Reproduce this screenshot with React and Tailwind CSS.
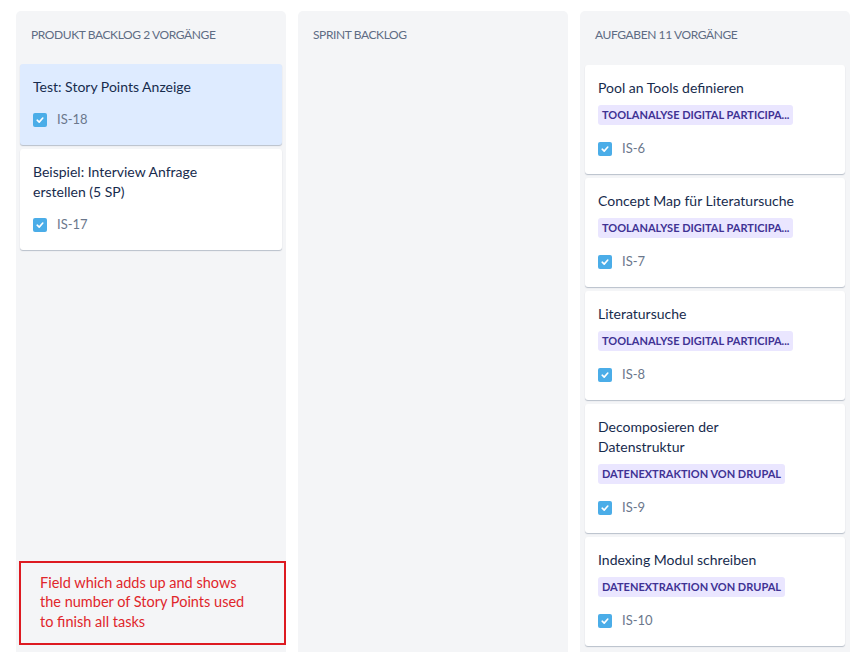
import React from "react";

const backlog = [
  { title: ["Test: Story Points Anzeige"], key: "IS-18", selected: true },
  { title: ["Beispiel: Interview Anfrage", "erstellen (5 SP)"], key: "IS-17" },
];

const aufgaben = [
  { title: ["Pool an Tools definieren"], epic: "TOOLANALYSE DIGITAL PARTICIPA...", key: "IS-6" },
  { title: ["Concept Map für Literatursuche"], epic: "TOOLANALYSE DIGITAL PARTICIPA...", key: "IS-7" },
  { title: ["Literatursuche"], epic: "TOOLANALYSE DIGITAL PARTICIPA...", key: "IS-8" },
  { title: ["Decomposieren der", "Datenstruktur"], epic: "DATENEXTRAKTION VON DRUPAL", key: "IS-9" },
  { title: ["Indexing Modul schreiben"], epic: "DATENEXTRAKTION VON DRUPAL", key: "IS-10" },
];

function Check() {
  return (
    <span className="w-[14px] h-[14px] rounded-[2px] bg-[#4bade8] flex items-center justify-center shrink-0">
      <svg width="10" height="10" viewBox="0 0 10 10">
        <path d="M2.2 5.2 L4.2 7.1 L7.8 3" stroke="white" strokeWidth="1.6" fill="none" strokeLinecap="round" strokeLinejoin="round" />
      </svg>
    </span>
  );
}

function Card({ item }) {
  return (
    <div
      className={
        "rounded-[3px] shadow-[0_1px_1px_rgba(9,30,66,0.25)] pl-[13px] pr-3 pt-[13px] pb-[17px] " +
        (item.selected ? "bg-[#deebff]" : "bg-white")
      }
    >
      <div className="text-[14px] leading-[20px] text-[#172b4d]">
        {item.title.map((l) => (
          <div key={l}>{l}</div>
        ))}
      </div>
      {item.epic && (
        <div className="mt-[7px] h-[20px]">
          <span className="inline-block bg-[#eae6ff] text-[#403294] font-bold text-[11px] leading-[20px] px-[4px] rounded-[3px] min-w-0 max-w-[200px] truncate">
            {item.epic}
          </span>
        </div>
      )}
      <div className={"flex items-center gap-[10px] h-[16px] " + (item.epic ? "mt-[16px]" : "mt-[15px]")}>
        <Check />
        <span className="text-[13px] text-[#6b778c]">{item.key}</span>
      </div>
    </div>
  );
}

function Column({ title, children, footer }) {
  return (
    <div className="w-[270px] bg-[#f4f5f7] rounded-t-[5px] flex flex-col">
      <div className="h-[53px] pl-[15px] pt-[16px] text-[12px] leading-[16px] text-[#5e6c84] tracking-[-0.4px]">{title}</div>
      <div className="flex flex-col gap-[4px] px-[4px] flex-1">{children}</div>
      {footer}
    </div>
  );
}

export default function App() {
  return (
    <div
      className="w-[856px] h-[652px] overflow-hidden bg-white flex gap-[12px] pl-[16px] pt-[11px]"
      style={{ fontFamily: "'Lato', 'Noto Sans', sans-serif" }}
    >
      <Column
        title="PRODUKT BACKLOG 2 VORGÄNGE"
        footer={
          <div className="ml-[3px] w-[267px] mb-[7px] border-[2.5px] border-[#dd1a21] pl-[19px] pt-[10px] pb-[12px] text-[14.5px] leading-[19.5px] text-[#e0262b]">
            Field which adds up and shows
            <br />
            the number of Story Points used
            <br />
            to finish all tasks
          </div>
        }
      >
        {backlog.map((it) => (
          <Card key={it.key} item={it} />
        ))}
      </Column>
      <Column title="SPRINT BACKLOG" />
      <Column title="AUFGABEN 11 VORGÄNGE">
        <div className="flex flex-col gap-[4px] pt-[1px] px-[1px]">
          {aufgaben.map((it) => (
            <Card key={it.key} item={it} />
          ))}
        </div>
      </Column>
    </div>
  );
}
